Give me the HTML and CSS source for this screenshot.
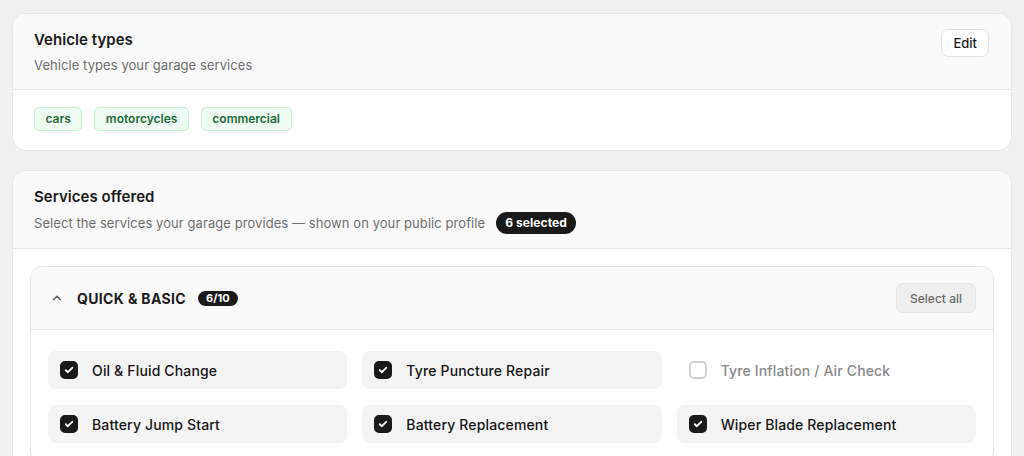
FILE: index.html
```html
<!DOCTYPE html>
<html lang="en">
<head>
  <meta charset="UTF-8" />
  <title>Garage profile</title>
  <link rel="stylesheet" href="styles.css">
</head>
<body>
  <section class="card">
    <div class="card-head">
      <div>
        <h2 class="card-title">Vehicle types</h2>
        <p class="card-sub">Vehicle types your garage services</p>
      </div>
      <button class="btn-edit">Edit</button>
    </div>
    <div class="card-body tags">
      <span class="tag">cars</span>
      <span class="tag">motorcycles</span>
      <span class="tag">commercial</span>
    </div>
  </section>

  <section class="card">
    <div class="card-head">
      <div>
        <h2 class="card-title">Services offered</h2>
        <p class="card-sub">Select the services your garage provides — shown on your public profile
          <span class="count-pill">6 selected</span></p>
      </div>
    </div>
    <div class="card-body services">
      <div class="group">
        <div class="group-head">
          <svg class="chevron" width="16" height="16" viewBox="0 0 16 16" fill="none">
            <path d="M4.5 9.8l3.5-3.5 3.5 3.5" stroke="#666" stroke-width="1.5" stroke-linecap="round" stroke-linejoin="round"/>
          </svg>
          <span class="group-title">QUICK &amp; BASIC</span>
          <span class="group-count">6/10</span>
          <button class="btn-select">Select all</button>
        </div>
        <div class="grid">
          <label class="item on"><span class="box"><svg width="12" height="12" viewBox="0 0 12 12"><path d="M2.8 6.2l2.1 2 4.3-4.4" fill="none" stroke="#fff" stroke-width="1.9" stroke-linecap="round" stroke-linejoin="round"/></svg></span>Oil &amp; Fluid Change</label>
          <label class="item on"><span class="box"><svg width="12" height="12" viewBox="0 0 12 12"><path d="M2.8 6.2l2.1 2 4.3-4.4" fill="none" stroke="#fff" stroke-width="1.9" stroke-linecap="round" stroke-linejoin="round"/></svg></span>Tyre Puncture Repair</label>
          <label class="item"><span class="box"></span>Tyre Inflation / Air Check</label>
          <label class="item on"><span class="box"><svg width="12" height="12" viewBox="0 0 12 12"><path d="M2.8 6.2l2.1 2 4.3-4.4" fill="none" stroke="#fff" stroke-width="1.9" stroke-linecap="round" stroke-linejoin="round"/></svg></span>Battery Jump Start</label>
          <label class="item on"><span class="box"><svg width="12" height="12" viewBox="0 0 12 12"><path d="M2.8 6.2l2.1 2 4.3-4.4" fill="none" stroke="#fff" stroke-width="1.9" stroke-linecap="round" stroke-linejoin="round"/></svg></span>Battery Replacement</label>
          <label class="item on"><span class="box"><svg width="12" height="12" viewBox="0 0 12 12"><path d="M2.8 6.2l2.1 2 4.3-4.4" fill="none" stroke="#fff" stroke-width="1.9" stroke-linecap="round" stroke-linejoin="round"/></svg></span>Wiper Blade Replacement</label>
        </div>
      </div>
    </div>
  </section>
</body>
</html>
```

FILE: styles.css
```css
* {
  box-sizing: border-box;
}

body {
  margin: 0;
  padding: 13px 12px 0;
  background: #f0f0f0;
  font-family: Inter, 'Noto Sans', sans-serif;
  color: #1a1a1a;
}

.card {
  background: #fff;
  border: 1px solid #e6e6e6;
  border-radius: 14px;
  overflow: hidden;
  margin-bottom: 19px;
}

.card-head {
  display: flex;
  justify-content: space-between;
  align-items: flex-start;
  background: #fafafa;
  border-bottom: 1px solid #e8e8e8;
  padding: 15px 22px 14px 21px;
}

.card-title {
  margin: 0;
  font-size: 15px;
  font-weight: 600;
  line-height: 22px;
  letter-spacing: 0.05px;
}

.card-sub {
  margin: 4px 0 0;
  font-size: 13px;
  line-height: 20px;
  color: #6e6e6e;
  letter-spacing: 0.07px;
  display: flex;
  align-items: center;
  gap: 11px;
}

.btn-edit {
  font-family: inherit;
  font-size: 13px;
  font-weight: 500;
  color: #1a1a1a;
  background: #fff;
  border: 1px solid #e3e3e3;
  border-radius: 7px;
  padding: 0 11px;
  height: 28px;
}

.card-body {
  padding: 17px 22px 19px 21px;
}

.tags {
  display: flex;
  gap: 12px;
}

.tag {
  font-size: 12px;
  font-weight: 600;
  color: #1f6b3a;
  background: #effcf3;
  border: 1px solid #c7f0d4;
  border-radius: 5px;
  padding: 0 10.5px;
  line-height: 22px;
}

.count-pill {
  background: #1a1a1a;
  color: #fff;
  font-size: 12px;
  font-weight: 700;
  border-radius: 12px;
  padding: 0 9px;
  line-height: 22px;
}

.services {
  padding: 17px 17px 20px;
}

.group {
  border: 1px solid #e6e6e6;
  border-radius: 12px;
  overflow: hidden;
}

.group-head {
  display: flex;
  align-items: center;
  background: #fafafa;
  border-bottom: 1px solid #e8e8e8;
  padding: 16px 17px 16px 18px;
}

.chevron {
  margin-right: 12px;
}

.group-title {
  font-size: 14px;
  font-weight: 700;
  letter-spacing: 0.35px;
}

.group-count {
  margin-left: 12px;
  background: #1a1a1a;
  color: #fff;
  font-size: 11px;
  font-weight: 700;
  border-radius: 8px;
  padding: 0 8px;
  line-height: 15px;
}

.btn-select {
  margin-left: auto;
  font-family: inherit;
  font-size: 12px;
  font-weight: 500;
  color: #6b6b6b;
  background: #efefef;
  border: 1px solid #e4e4e4;
  border-radius: 7px;
  height: 30px;
  padding: 0 13px;
}

.grid {
  display: grid;
  grid-template-columns: repeat(3, 1fr);
  gap: 16px 15px;
  padding: 21px 17px 20px;
}

.item {
  display: flex;
  align-items: center;
  gap: 14px;
  height: 38px;
  padding: 0 12px;
  border-radius: 8px;
  font-size: 14px;
  font-weight: 500;
  letter-spacing: 0.15px;
  color: #8a8a8a;
}

.item.on {
  background: #f4f4f4;
  color: #161616;
}

.box {
  width: 18px;
  height: 18px;
  border-radius: 5px;
  border: 2px solid #d2d2d2;
  background: #fff;
  display: flex;
  align-items: center;
  justify-content: center;
}

.item.on .box {
  background: #1a1a1a;
  border-color: #1a1a1a;
}
```
